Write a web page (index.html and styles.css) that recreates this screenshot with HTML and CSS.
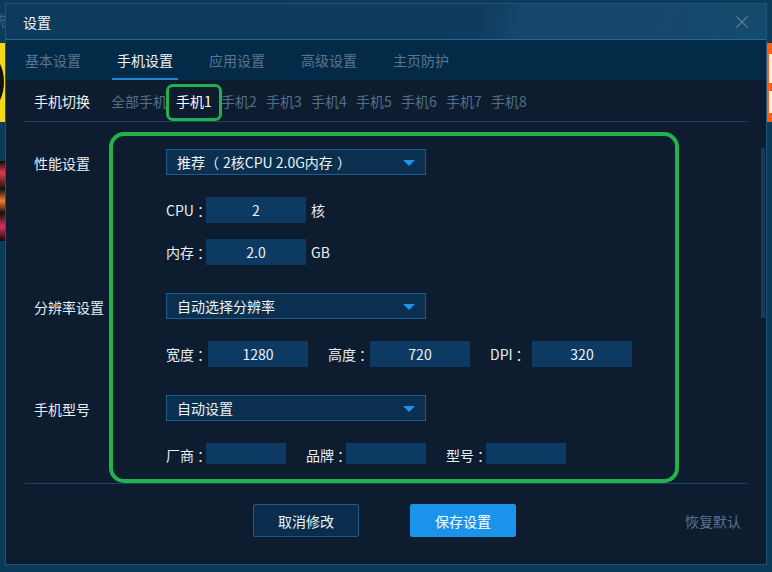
FILE: index.html
```html
<!DOCTYPE html>
<html lang="zh-CN">
<head>
    <meta charset="UTF-8">
    <meta name="viewport" content="width=device-width, initial-scale=1.0">
    <title>设置</title>
    <link rel="stylesheet" href="styles.css">
</head>
<body>
    <div class="desktop">
        <!-- app behind the dialog -->
        <div class="behind-text">统</div>
        <div class="behind-tile tile-yellow"><div class="tile-ring"></div></div>
        <div class="behind-tile tile-red"></div>
        <div class="behind-tile tile-orange"><div class="tile-white"></div><div class="tile-white second"></div></div>

        <div class="dialog">
            <div class="title-bar">
                <span class="title">设置</span>
                <svg class="close" width="12" height="12" viewBox="0 0 12 12">
                    <path d="M0.5 0.5 L11.5 11.5 M11.5 0.5 L0.5 11.5" stroke="#5d7b93" stroke-width="1.1" fill="none"/>
                </svg>
            </div>

            <div class="tabs">
                <span class="tab">基本设置</span>
                <span class="tab active">手机设置</span>
                <span class="tab">应用设置</span>
                <span class="tab">高级设置</span>
                <span class="tab">主页防护</span>
            </div>

            <div class="content">
                <div class="phone-switch">
                    <span class="switch-label">手机切换</span>
                    <span class="phone all">全部手机</span>
                    <span class="phone current">手机1</span>
                    <span class="phone">手机2</span>
                    <span class="phone">手机3</span>
                    <span class="phone">手机4</span>
                    <span class="phone">手机5</span>
                    <span class="phone">手机6</span>
                    <span class="phone">手机7</span>
                    <span class="phone">手机8</span>
                </div>

                <div class="scroll-area">
                    <div class="form">
                        <!-- performance -->
                        <div class="section">
                            <div class="section-label">性能设置</div>
                            <div class="section-body">
                                <div class="select">
                                    <span>推荐<span class="paren-open">（</span>2核CPU 2.0G内存<span class="paren-close">）</span></span>
                                    <span class="arrow"></span>
                                </div>
                                <div class="field-row">
                                    <span class="field-name">CPU<span class="colon">：</span></span>
                                    <span class="field-input">2</span>
                                    <span class="field-unit">核</span>
                                </div>
                                <div class="field-row tight">
                                    <span class="field-name">内存<span class="colon">：</span></span>
                                    <span class="field-input">2.0</span>
                                    <span class="field-unit">GB</span>
                                </div>
                            </div>
                        </div>

                        <!-- resolution -->
                        <div class="section">
                            <div class="section-label">分辨率设置</div>
                            <div class="section-body">
                                <div class="select">
                                    <span>自动选择分辨率</span>
                                    <span class="arrow"></span>
                                </div>
                                <div class="field-row">
                                    <span class="field-name wide">宽度<span class="colon">：</span></span>
                                    <span class="field-input">1280</span>
                                    <span class="field-name wide">高度<span class="colon">：</span></span>
                                    <span class="field-input">720</span>
                                    <span class="field-name wide">DPI<span class="colon">：</span></span>
                                    <span class="field-input">320</span>
                                </div>
                            </div>
                        </div>

                        <!-- model -->
                        <div class="section">
                            <div class="section-label">手机型号</div>
                            <div class="section-body">
                                <div class="select">
                                    <span>自动设置</span>
                                    <span class="arrow"></span>
                                </div>
                                <div class="field-row last">
                                    <span class="field-name">厂商<span class="colon">：</span></span>
                                    <span class="field-input short"></span>
                                    <span class="field-name">品牌<span class="colon">：</span></span>
                                    <span class="field-input short"></span>
                                    <span class="field-name">型号<span class="colon">：</span></span>
                                    <span class="field-input short"></span>
                                </div>
                            </div>
                        </div>
                    </div>
                    <div class="scroll-thumb"></div>
                </div>

                <div class="divider"></div>

                <div class="footer">
                    <button class="btn">取消修改</button>
                    <button class="btn primary">保存设置</button>
                    <span class="reset">恢复默认</span>
                </div>
            </div>

            <!-- annotation marks -->
            <div class="mark mark-phone"></div>
            <div class="mark mark-form"></div>
        </div>
    </div>
</body>
</html>
```

FILE: styles.css
```css
* {
    margin: 0;
    padding: 0;
    box-sizing: border-box;
}

body {
    background: #0c3957;
    font-family: "Noto Sans CJK SC", "Microsoft YaHei", sans-serif;
    font-size: 14px;
    color: #e8eef4;
    overflow: hidden;
}

.desktop {
    position: relative;
    width: 772px;
    height: 572px;
    padding: 3px 0 0 5px;
    background: linear-gradient(180deg, #0d3b5a, #0b3a58);
    overflow: hidden;
}

/* Things behind the dialog */
.behind-text {
    position: absolute;
    left: -9px;
    top: 8px;
    font-size: 16px;
    color: #3d6685;
}

.behind-tile {
    position: absolute;
    overflow: hidden;
}

.tile-yellow {
    left: 0;
    top: 43px;
    width: 5px;
    height: 79px;
    background: #f4d916;
}

.tile-ring {
    position: absolute;
    left: -22px;
    top: 14px;
    width: 26px;
    height: 50px;
    border: 4px solid #111;
    border-radius: 50%;
}

.tile-red {
    left: 0;
    top: 161px;
    width: 5px;
    height: 80px;
    background: linear-gradient(180deg, #0a0a0a 0%, #e23a4a 15%, #111 35%, #f07a30 50%, #111 65%, #d8305a 82%, #0a0a0a 100%);
}

.tile-orange {
    left: 767px;
    top: 43px;
    width: 5px;
    height: 79px;
    background: #f4621a;
}

.tile-white {
    position: absolute;
    left: 2px;
    top: 11px;
    width: 4px;
    height: 29px;
    background: #f3f3f3;
}

.tile-white.second {
    top: 48px;
    height: 22px;
}

/* Dialog */
.dialog {
    position: relative;
    width: 762px;
    height: 562px;
    border: 1px solid #1f557b;
    background: #0e1c30;
    display: flex;
    flex-direction: column;
}

.title-bar {
    height: 36px;
    display: flex;
    align-items: center;
    padding: 0 17px 0 17px;
    border-bottom: 1px solid #2a6794;
    background: linear-gradient(100deg, #0e3a5b 0%, #0f3c5e 62%, #17466f 68%, #17466f 82%, #144b6c 100%);
}

.title {
    color: #f2f6fa;
    line-height: 20px;
}

.close {
    margin-left: auto;
    margin-right: 1px;
}

.tabs {
    height: 40px;
    display: flex;
    align-items: stretch;
    gap: 36px;
    padding-left: 19px;
    background: #032a47;
}

.tab {
    display: flex;
    align-items: center;
    color: #5a7690;
    border-bottom: 2px solid transparent;
    padding-top: 2px;
}

.tab.active {
    color: #f2f6fa;
    border-bottom-color: #1f88d6;
    margin: 0 -5px;
    padding: 2px 5px 0;
}

.content {
    flex: 1;
    display: flex;
    flex-direction: column;
}

/* Phone switch row */
.phone-switch {
    height: 42px;
    margin: 0 19px;
    padding-left: 9px;
    display: flex;
    align-items: center;
    gap: 9px;
    border-bottom: 1px solid #1b4467;
}

.switch-label {
    color: #eef3f8;
    margin-right: 12px;
}

.phone {
    width: 36px;
    color: #52708a;
    white-space: nowrap;
}

.phone.all {
    width: 56px;
}

.phone.current {
    color: #ffffff;
}

/* Scrolling form area */
.scroll-area {
    position: relative;
    height: 342px;
    overflow: hidden;
    padding: 27px 0 0 28px;
}

.scroll-thumb {
    position: absolute;
    right: 1px;
    top: 26px;
    width: 4px;
    height: 170px;
    background: #193a5a;
}

.form {
    display: flex;
    flex-direction: column;
    gap: 28px;
}

.section {
    display: flex;
}

.section-label {
    width: 132px;
    height: 26px;
    line-height: 28px;
    color: #e8eef4;
}

.section-body {
    display: flex;
    flex-direction: column;
}

.select {
    width: 260px;
    height: 26px;
    display: flex;
    align-items: center;
    justify-content: space-between;
    padding: 0 10px 0 10px;
    background: #0a2f4f;
    border: 1px solid #1d5b8c;
    color: #eef3f8;
}

.paren-open {
    margin-right: 4px;
}

.paren-close {
    margin-left: 4px;
}

.arrow {
    width: 0;
    height: 0;
    border-left: 6px solid transparent;
    border-right: 6px solid transparent;
    border-top: 6px solid #1e92ec;
    margin-top: 1px;
}

.field-row {
    display: flex;
    align-items: center;
    height: 26px;
    margin-top: 22px;
}

.field-row.tight {
    margin-top: 16px;
}

.field-row.last {
    align-items: flex-start;
}

.field-row.last .field-name {
    padding-top: 4px;
}

.field-name {
    width: 40px;
    line-height: 16px;
    color: #e8eef4;
    white-space: nowrap;
}

.colon {
    margin-left: 3px;
}

.field-name.wide {
    width: 42px;
}

.field-input + .field-name {
    margin-left: 20px;
}

.field-input {
    width: 100px;
    height: 26px;
    line-height: 26px;
    text-align: center;
    background: #0c3a62;
    color: #eef3f8;
}

.field-input.short {
    width: 80px;
}

.field-unit {
    margin-left: 5px;
    color: #e8eef4;
}

.divider {
    height: 1px;
    margin: 19px 19px 0;
    background: #1b4467;
}

/* Footer */
.footer {
    display: flex;
    align-items: center;
    padding: 20px 25px 0 247px;
}

.btn {
    width: 106px;
    height: 33px;
    font: inherit;
    color: #eef3f8;
    background: #0a2d4d;
    border: 1px solid #1d5b8c;
    border-radius: 2px;
}

.btn.primary {
    margin-left: 51px;
    background: #1a94ea;
    border-color: #1a94ea;
    color: #ffffff;
}

.reset {
    margin-left: auto;
    color: #587590;
}

/* Green annotation marks */
.mark {
    position: absolute;
    border: 3px solid #22b14c;
}

.mark-phone {
    left: 160px;
    top: 80px;
    width: 56px;
    height: 37px;
    border-radius: 7px;
}

.mark-form {
    left: 103px;
    top: 128px;
    width: 570px;
    height: 351px;
    border-width: 4px;
    border-radius: 15px;
}
```
